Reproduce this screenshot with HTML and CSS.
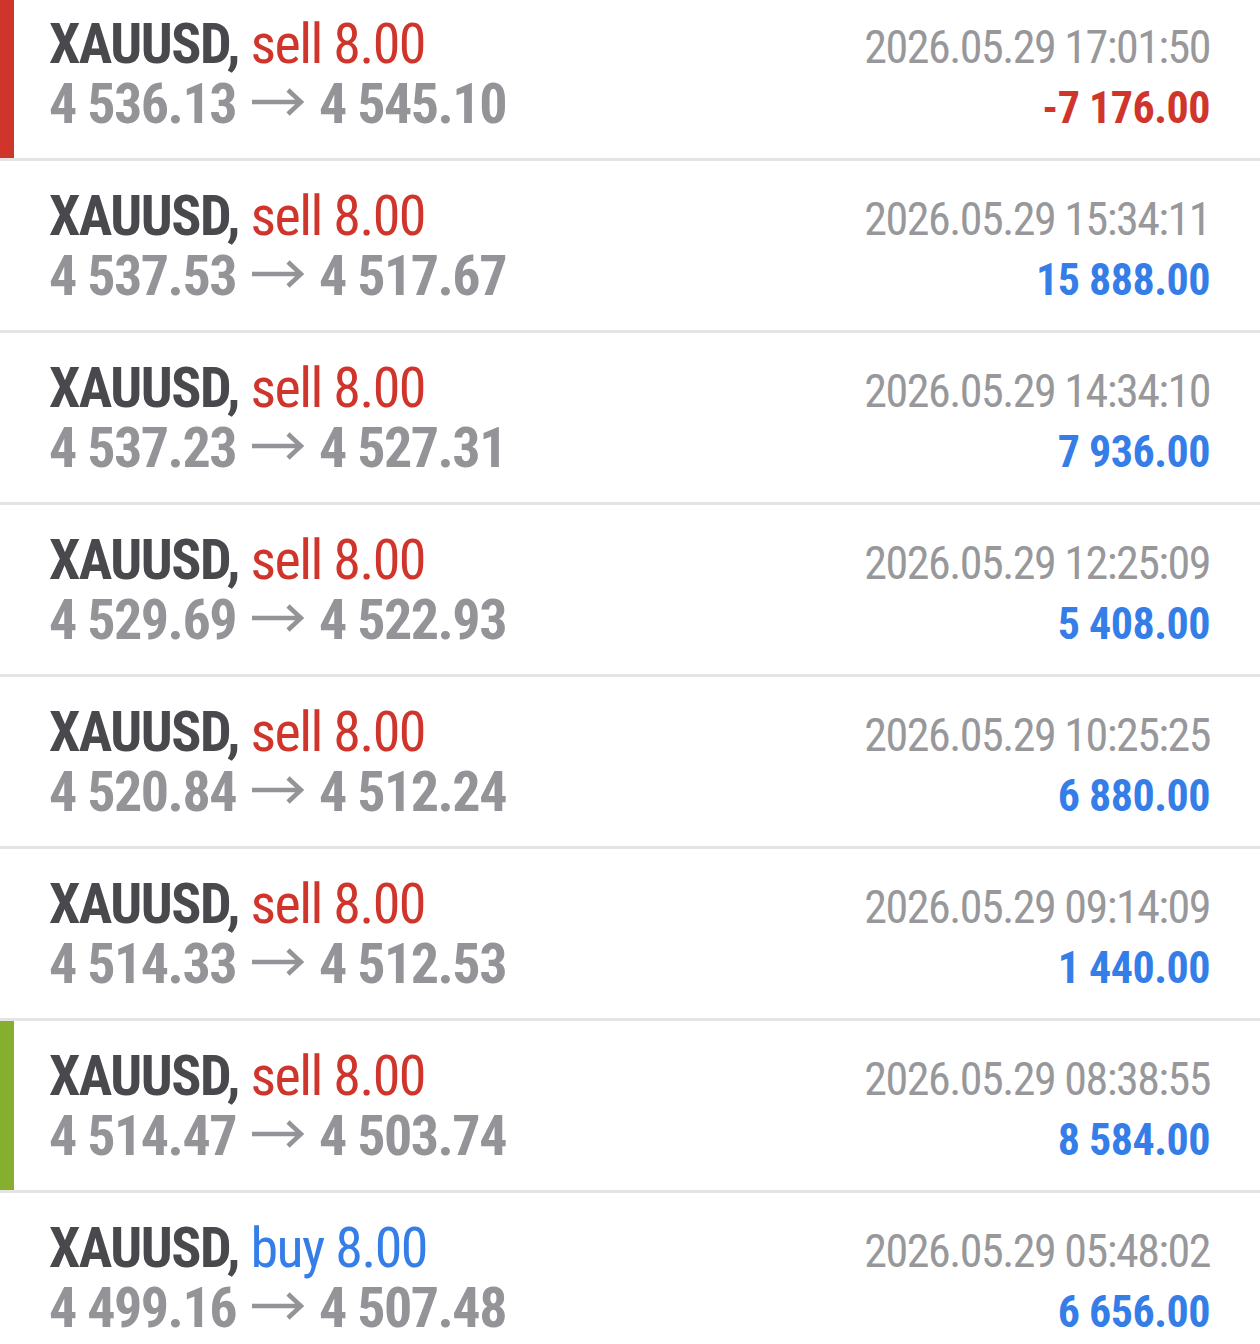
FILE: index.html
```html
<!DOCTYPE html>
<html lang="en">
<head>
<title>History</title>
<link rel="stylesheet" href="styles.css">
</head>
<body>
<div class="list">

  <div class="deal loss">
    <span class="head">XAUUSD, <span class="sell">sell 8.00</span></span>
    <span class="time">2026.05.29 17:01:50</span>
    <span class="prices">4 536.13<svg class="arrow" viewBox="0 0 52 28"><path d="M0 14H49M36 2L49 14L36 26"/></svg>4 545.10</span>
    <span class="profit neg">-7 176.00</span>
  </div>

  <div class="deal">
    <span class="head">XAUUSD, <span class="sell">sell 8.00</span></span>
    <span class="time">2026.05.29 15:34:11</span>
    <span class="prices">4 537.53<svg class="arrow" viewBox="0 0 52 28"><path d="M0 14H49M36 2L49 14L36 26"/></svg>4 517.67</span>
    <span class="profit">15 888.00</span>
  </div>

  <div class="deal">
    <span class="head">XAUUSD, <span class="sell">sell 8.00</span></span>
    <span class="time">2026.05.29 14:34:10</span>
    <span class="prices">4 537.23<svg class="arrow" viewBox="0 0 52 28"><path d="M0 14H49M36 2L49 14L36 26"/></svg>4 527.31</span>
    <span class="profit">7 936.00</span>
  </div>

  <div class="deal">
    <span class="head">XAUUSD, <span class="sell">sell 8.00</span></span>
    <span class="time">2026.05.29 12:25:09</span>
    <span class="prices">4 529.69<svg class="arrow" viewBox="0 0 52 28"><path d="M0 14H49M36 2L49 14L36 26"/></svg>4 522.93</span>
    <span class="profit">5 408.00</span>
  </div>

  <div class="deal">
    <span class="head">XAUUSD, <span class="sell">sell 8.00</span></span>
    <span class="time">2026.05.29 10:25:25</span>
    <span class="prices">4 520.84<svg class="arrow" viewBox="0 0 52 28"><path d="M0 14H49M36 2L49 14L36 26"/></svg>4 512.24</span>
    <span class="profit">6 880.00</span>
  </div>

  <div class="deal">
    <span class="head">XAUUSD, <span class="sell">sell 8.00</span></span>
    <span class="time">2026.05.29 09:14:09</span>
    <span class="prices">4 514.33<svg class="arrow" viewBox="0 0 52 28"><path d="M0 14H49M36 2L49 14L36 26"/></svg>4 512.53</span>
    <span class="profit">1 440.00</span>
  </div>

  <div class="deal win">
    <span class="head">XAUUSD, <span class="sell">sell 8.00</span></span>
    <span class="time">2026.05.29 08:38:55</span>
    <span class="prices">4 514.47<svg class="arrow" viewBox="0 0 52 28"><path d="M0 14H49M36 2L49 14L36 26"/></svg>4 503.74</span>
    <span class="profit">8 584.00</span>
  </div>

  <div class="deal">
    <span class="head">XAUUSD, <span class="buy">buy 8.00</span></span>
    <span class="time">2026.05.29 05:48:02</span>
    <span class="prices">4 499.16<svg class="arrow" viewBox="0 0 52 28"><path d="M0 14H49M36 2L49 14L36 26"/></svg>4 507.48</span>
    <span class="profit">6 656.00</span>
  </div>

</div> <!-- end list -->
</body>
</html>
```
FILE: styles.css
```css
body {
  margin: 0;
  background: #fff;
  font-family: "Roboto Condensed", Roboto, sans-serif;
  overflow: hidden;
}

/* the list is scrolled a little, first row is cut at the top */
.list {margin-top: -11px;}

.deal {
  display: grid;
  grid-template-columns: 1fr auto;
  grid-auto-rows: 60px;
  align-items: baseline;
  height: 172px;
  box-sizing: border-box;
  padding: 25px 50px 0 49px;
  border-bottom: 3px solid #e4e4e4;
  line-height: 60px;
  letter-spacing: -1.5px;
}
.loss {box-shadow: inset 14px 0 0 #d0352c;}
.win {box-shadow: inset 14px 0 0 #86ae2f;}

.head {
  font-size: 56px;
  font-weight: 700;
  color: #48484d;
}
.sell, .buy {font-weight: 400;}
.sell {color: #d0352c;}
.buy {color: #357ee8;}

.prices {
  font-size: 56px;
  font-weight: 700;
  color: #939398;
}
.arrow {
  width: 52px;
  height: 28px;
  margin: 0 15px 0 16px;
  vertical-align: 7px;
  fill: none;
  stroke: #939398;
  stroke-width: 4.5;
}

.time {
  text-align: right;
  font-size: 46px;
  color: #98989b;
}
.profit {
  text-align: right;
  font-size: 44px;
  font-weight: 700;
  letter-spacing: -0.5px;
  color: #357ee8;
}
.profit.neg {color: #d0352c;}
```
